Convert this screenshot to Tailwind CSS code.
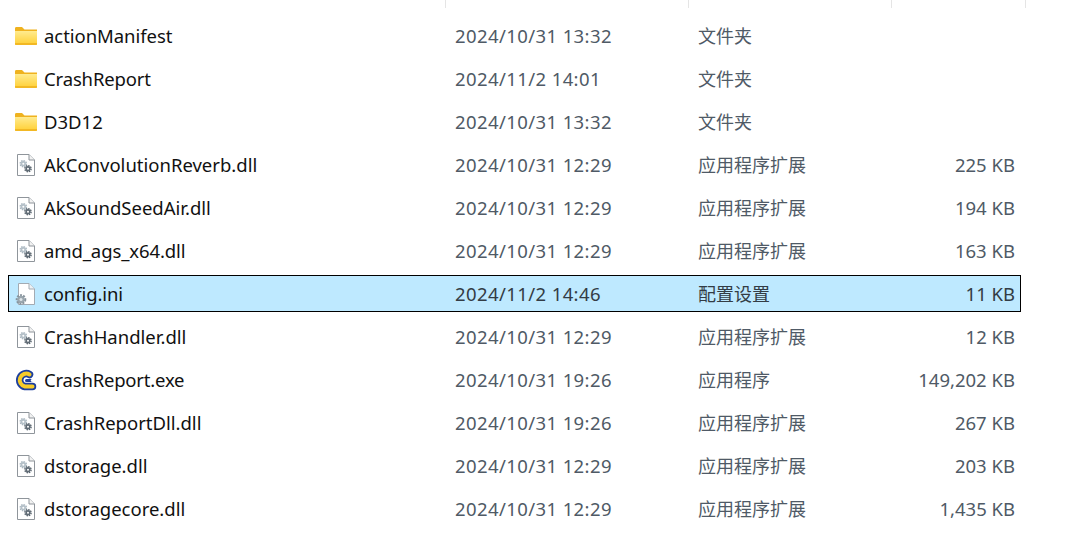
<!DOCTYPE html>
<html lang="zh-CN">
<head>
  <meta charset="UTF-8" />
  <title>config</title>
  <script src="https://cdn.jsdelivr.net/npm/@tailwindcss/browser@4"></script>
</head>
<body class="bg-white overflow-hidden font-['Noto_Sans','Noto_Sans_CJK_SC',sans-serif] text-[18.5px] text-[#4f5a66]">

  <!-- icons used by the rows -->
  <svg class="absolute w-0 h-0">
    <defs>
      <linearGradient id="fold" x1="0" y1="0" x2="0" y2="1">
        <stop offset="0" stop-color="#ffeb8f"/>
        <stop offset="1" stop-color="#ffcf33"/>
      </linearGradient>
    </defs>
    <symbol id="folder" viewBox="0 0 22 18">
      <path d="M0 1.500C0 .7.500 0 1.300 0H7l2.500 2.500H22V5H0Z" fill="#efb21f"/>
      <path d="M0 4h22v12.500c0 .8-.5 1.500-1.300 1.500H1.300C.5 18 0 17.300 0 16.500Z" fill="url(#fold)"/>
      <path d="M0 16h22v1c0 .6-.5 1-1.200 1H1.200C.5 18 0 17.600 0 17Z" fill="#f2b824"/>
    </symbol>
    <symbol id="dll" viewBox="0 0 18 22">
      <path d="M.5.500h11.500l5.500 5.500v15.500H.5Z" fill="#fff" stroke="#8f959b"/>
      <path d="M12 .500V6h5.500" fill="#f2f2f2" stroke="#8f959b"/>
      <circle cx="6.300" cy="9.700" r="2.600" fill="#b4c0c8"/>
      <circle cx="6.300" cy="9.700" r="3.100" fill="none" stroke="#a9b6bf" stroke-width="1.400" stroke-dasharray="1.500 .9"/>
      <circle cx="6.300" cy="9.700" r="1" fill="#fff"/>
      <circle cx="11" cy="14.700" r="2.600" fill="#5f6b75"/>
      <circle cx="11" cy="14.700" r="3.100" fill="none" stroke="#59646e" stroke-width="1.400" stroke-dasharray="1.500 .9"/>
      <circle cx="11" cy="14.700" r="1" fill="#fff"/>
    </symbol>
  </svg>

  <!-- column dividers -->
  <div class="flex h-2 pl-[445px]">
    <div class="w-[243px] border-l border-[#e5e5e5]"></div>
    <div class="w-[203px] border-l border-[#e5e5e5]"></div>
    <div class="w-[135px] border-l border-r border-[#e5e5e5]"></div>
  </div>

  <div class="flex flex-col gap-[6px] pt-[9px] pl-2 w-[1021px]">

    <div class="grid grid-cols-[446px_243px_1fr_auto] items-center h-[37px] pr-[5px] border border-transparent">
      <div class="flex items-center pl-[6px] gap-[7px] text-[#111] tracking-[-0.05px]"><svg width="22" height="18"><use href="#folder"/></svg><span>actionManifest</span></div>
      <div class="tracking-[0.4px]">2024/10/31 13:32</div>
      <div class="text-[18px] pt-[2px]">文件夹</div>
      <div></div>
    </div>

    <div class="grid grid-cols-[446px_243px_1fr_auto] items-center h-[37px] pr-[5px] border border-transparent">
      <div class="flex items-center pl-[6px] gap-[7px] text-[#111] tracking-[-0.15px]"><svg width="22" height="18"><use href="#folder"/></svg><span>CrashReport</span></div>
      <div class="tracking-[0.4px]">2024/11/2 14:01</div>
      <div class="text-[18px] pt-[2px]">文件夹</div>
      <div></div>
    </div>

    <div class="grid grid-cols-[446px_243px_1fr_auto] items-center h-[37px] pr-[5px] border border-transparent">
      <div class="flex items-center pl-[6px] gap-[7px] text-[#111]"><svg width="22" height="18"><use href="#folder"/></svg><span>D3D12</span></div>
      <div class="tracking-[0.4px]">2024/10/31 13:32</div>
      <div class="text-[18px] pt-[2px]">文件夹</div>
      <div></div>
    </div>

    <div class="grid grid-cols-[446px_243px_1fr_auto] items-center h-[37px] pr-[5px] border border-transparent">
      <div class="flex items-center pl-[8px] gap-[9px] text-[#111]"><svg width="18" height="22"><use href="#dll"/></svg><span>AkConvolutionReverb.dll</span></div>
      <div class="tracking-[0.4px]">2024/10/31 12:29</div>
      <div class="text-[18px] pt-[2px]">应用程序扩展</div>
      <div class="text-right">225 KB</div>
    </div>

    <div class="grid grid-cols-[446px_243px_1fr_auto] items-center h-[37px] pr-[5px] border border-transparent">
      <div class="flex items-center pl-[8px] gap-[9px] text-[#111]"><svg width="18" height="22"><use href="#dll"/></svg><span>AkSoundSeedAir.dll</span></div>
      <div class="tracking-[0.4px]">2024/10/31 12:29</div>
      <div class="text-[18px] pt-[2px]">应用程序扩展</div>
      <div class="text-right">194 KB</div>
    </div>

    <div class="grid grid-cols-[446px_243px_1fr_auto] items-center h-[37px] pr-[5px] border border-transparent">
      <div class="flex items-center pl-[8px] gap-[9px] text-[#111] tracking-[-0.1px]"><svg width="18" height="22"><use href="#dll"/></svg><span>amd_ags_x64.dll</span></div>
      <div class="tracking-[0.4px]">2024/10/31 12:29</div>
      <div class="text-[18px] pt-[2px]">应用程序扩展</div>
      <div class="text-right">163 KB</div>
    </div>

    <!-- selected row -->
    <div class="grid grid-cols-[446px_243px_1fr_auto] items-center h-[37px] pr-[5px] border border-black bg-[#bee9ff] text-[#333c45]">
      <div class="flex items-center pl-[8px] gap-[9px] text-[#111] tracking-[-0.1px]">
        <svg width="18" height="22" viewBox="0 0 18 22" class="overflow-visible">
          <path d="M1.500.500h10.500l5.500 5.500v15.500H1.500Z" fill="#fff" stroke="#a3abb3"/>
          <path d="M12 .500V6h5.500" fill="#eef2f5" stroke="#a3abb3"/>
          <circle cx="4" cy="16.500" r="3.800" fill="#9aa6ae"/>
          <circle cx="4" cy="16.500" r="4.400" fill="none" stroke="#87939c" stroke-width="1.800" stroke-dasharray="2 1.200"/>
          <circle cx="4" cy="16.500" r="1.500" fill="#dfe6ea"/>
        </svg>
        <span>config.ini</span>
      </div>
      <div class="tracking-[0.4px]">2024/11/2 14:46</div>
      <div class="text-[18px] pt-[2px]">配置设置</div>
      <div class="text-right">11 KB</div>
    </div>

    <div class="grid grid-cols-[446px_243px_1fr_auto] items-center h-[37px] pr-[5px] border border-transparent">
      <div class="flex items-center pl-[8px] gap-[9px] text-[#111]"><svg width="18" height="22"><use href="#dll"/></svg><span>CrashHandler.dll</span></div>
      <div class="tracking-[0.4px]">2024/10/31 12:29</div>
      <div class="text-[18px] pt-[2px]">应用程序扩展</div>
      <div class="text-right">12 KB</div>
    </div>

    <div class="grid grid-cols-[446px_243px_1fr_auto] items-center h-[37px] pr-[5px] border border-transparent">
      <div class="flex items-center pl-[6px] gap-[7px] text-[#111] tracking-[-0.2px]">
        <svg width="22" height="22" viewBox="0 0 22 22">
          <path d="M14.500 5.500A6.500 6.500 0 1 0 10 17.500H17.500" fill="none" stroke="#1c3f9e" stroke-width="7.500" stroke-linecap="round"/>
          <path d="M14.500 5.500A6.500 6.500 0 1 0 10 17.500H17.500" fill="none" stroke="#f6cb2a" stroke-width="4" stroke-linecap="round"/>
          <path d="M16 11.500h-4.500" fill="none" stroke="#1c3f9e" stroke-width="3" stroke-linecap="round"/>
          <circle cx="17" cy="11.500" r="1.300" fill="#fff"/>
        </svg>
        <span>CrashReport.exe</span>
      </div>
      <div class="tracking-[0.4px]">2024/10/31 19:26</div>
      <div class="text-[18px] pt-[2px]">应用程序</div>
      <div class="text-right">149,202 KB</div>
    </div>

    <div class="grid grid-cols-[446px_243px_1fr_auto] items-center h-[37px] pr-[5px] border border-transparent">
      <div class="flex items-center pl-[8px] gap-[9px] text-[#111]"><svg width="18" height="22"><use href="#dll"/></svg><span>CrashReportDll.dll</span></div>
      <div class="tracking-[0.4px]">2024/10/31 19:26</div>
      <div class="text-[18px] pt-[2px]">应用程序扩展</div>
      <div class="text-right">267 KB</div>
    </div>

    <div class="grid grid-cols-[446px_243px_1fr_auto] items-center h-[37px] pr-[5px] border border-transparent">
      <div class="flex items-center pl-[8px] gap-[9px] text-[#111]"><svg width="18" height="22"><use href="#dll"/></svg><span>dstorage.dll</span></div>
      <div class="tracking-[0.4px]">2024/10/31 12:29</div>
      <div class="text-[18px] pt-[2px]">应用程序扩展</div>
      <div class="text-right">203 KB</div>
    </div>

    <div class="grid grid-cols-[446px_243px_1fr_auto] items-center h-[37px] pr-[5px] border border-transparent">
      <div class="flex items-center pl-[8px] gap-[9px] text-[#111]"><svg width="18" height="22"><use href="#dll"/></svg><span>dstoragecore.dll</span></div>
      <div class="tracking-[0.4px]">2024/10/31 12:29</div>
      <div class="text-[18px] pt-[2px]">应用程序扩展</div>
      <div class="text-right">1,435 KB</div>
    </div>

  </div>
</body>
</html>
